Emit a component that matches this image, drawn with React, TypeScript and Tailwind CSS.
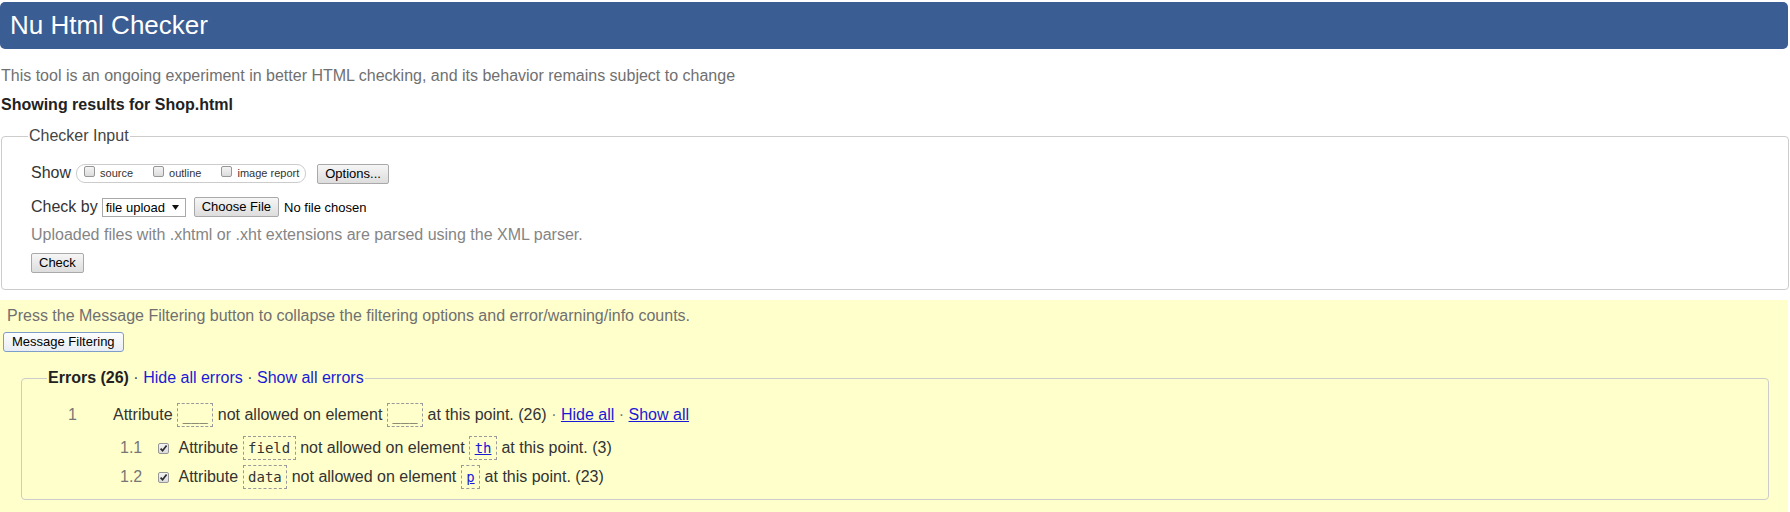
const sans = "font-['Liberation_Sans',Arial,sans-serif]";
const mono = "font-['DejaVu_Sans_Mono','Liberation_Mono',monospace]";

function Checkbox({ checked }: { checked?: boolean }) {
  return (
    <span className="inline-flex h-[11px] w-[11px] shrink-0 items-center justify-center rounded-[2px] border border-[#979797] bg-linear-to-b from-[#f4f4f4] to-[#dcdcdc]">
      {checked && (
        <svg width="9" height="9" viewBox="0 0 9 9">
          <path d="M1.6 4.6 L3.6 6.8 L7.6 1.6" fill="none" stroke="#2b2b2b" strokeWidth="1.7" />
        </svg>
      )}
    </span>
  );
}

function Btn({ children, className = "" }: { children: React.ReactNode; className?: string }) {
  return (
    <span
      className={
        "inline-flex h-[20px] items-center rounded-[2px] border border-[#a9a9a9] bg-linear-to-b from-[#f6f6f6] to-[#dddddd] px-[7px] text-[13px] leading-[18px] text-black " +
        className
      }
    >
      {children}
    </span>
  );
}

function Code({ children, link }: { children: React.ReactNode; link?: boolean }) {
  return (
    <span
      className={
        "inline-block border border-dashed border-[#9a9a9a] px-[4.5px] align-baseline text-[14px] leading-[22px] " +
        mono +
        (link ? " text-[#1a1ad6] underline" : " text-[#333]")
      }
    >
      {children}
    </span>
  );
}

function PillOption({ label }: { label: string }) {
  return (
    <span className="flex items-center">
      <span className="mb-[3px]">
        <Checkbox />
      </span>
      <span className="ml-[5px] text-[11px] leading-[13px] text-[#333]">{label}</span>
    </span>
  );
}

export default function App() {
  return (
    <div className={"min-h-[512px] bg-white text-[16px] " + sans}>
      {/* page heading */}
      <div className="mr-[2px] mt-[2px] h-[47px] rounded-[5px] bg-[#3a5d94] pl-[10px] pt-[8px]">
        <h1 className="text-[26px] font-normal leading-[30px] text-white">Nu Html Checker</h1>
      </div>

      <p className="mt-[17px] pl-[1px] leading-[20px] text-[#707070]">
        This tool is an ongoing experiment in better HTML checking, and its behavior remains subject to change
      </p>
      <p className="mt-[9px] pl-[1px] font-bold leading-[20px] text-[#222]">Showing results for Shop.html</p>

      {/* checker input */}
      <fieldset className="mx-[1px] mt-[11px] rounded-[4px] border border-[#cccccc] pb-[15px] pl-[26px] pt-[18px]">
        <legend className="px-[1px] leading-[20px] text-[#444]">Checker Input</legend>
        <div className="pl-[3px]">
          <div className="flex h-[20px] items-start">
            <span className="leading-[18px] text-[#333]">Show</span>
            <div className="ml-[5px] flex h-[19px] items-center gap-[20px] rounded-[9px] border border-[#cccccc] pl-[7px] pr-[6px]">
              <PillOption label="source" />
              <PillOption label="outline" />
              <PillOption label="image report" />
            </div>
            <Btn className="ml-[11px]">Options...</Btn>
          </div>

          <div className="mt-[13px] flex h-[20px] items-start">
            <span className="mt-[1px] leading-[18px] text-[#333]">Check by</span>
            <span className="ml-[4px] mt-[1px] flex h-[19px] w-[84px] items-center justify-between border border-[#a9a9a9] bg-white pl-[3px] pr-[6px] text-[13px] leading-[17px] text-black">
              file upload
              <svg width="7" height="5" viewBox="0 0 7 5">
                <path d="M0 0 H7 L3.5 5 Z" fill="#111" />
              </svg>
            </span>
            <Btn className="ml-[8px]">Choose File</Btn>
            <span className="ml-[5px] text-[13px] leading-[21px] text-black">No file chosen</span>
          </div>

          <p className="mt-[7px] leading-[21px] text-[#858585]">
            Uploaded files with .xhtml or .xht extensions are parsed using the XML parser.
          </p>
          <Btn className="mt-[8px]">Check</Btn>
        </div>
      </fieldset>

      {/* results */}
      <div className="mr-[2px] mt-[10px] bg-[#ffffcc] pb-[20px] pt-[5px]">
        <p className="pl-[7px] leading-[21px] text-[#707070]">
          Press the Message Filtering button to collapse the filtering options and error/warning/info counts.
        </p>
        <span className="ml-[3px] mt-[6px] inline-flex h-[20px] items-center rounded-[3px] border border-[#7f9dc9] bg-linear-to-b from-[#fdfdfd] to-[#e8edf4] px-[8px] text-[13px] leading-[18px] text-black">
          Message Filtering
        </span>

        <fieldset className="ml-[21px] mr-[19px] mt-[15px] rounded-[4px] border border-[#cccccc] pb-[9px] pl-[25px] pt-[15px]">
          <legend className="px-[1px] leading-[20px]">
            <span className="font-bold text-[#222]">Errors (26)</span>
            <span className="text-[#444]"> · </span>
            <span className="text-[#1a1ad6]">Hide all errors</span>
            <span className="text-[#444]"> · </span>
            <span className="text-[#1a1ad6]">Show all errors</span>
          </legend>

          <div className="h-[25px] whitespace-nowrap pl-[21px] leading-[24px] text-[#333]">
            <span className="inline-block w-[45px] text-[#777]">1</span>
            Attribute <Code>___</Code> not allowed on element <Code>___</Code> at this point. (26){" "}
            <span className="text-[#777]">·</span> <span className="text-[#1a1ad6] underline">Hide all</span>{" "}
            <span className="text-[#777]">·</span> <span className="text-[#1a1ad6] underline">Show all</span>
          </div>

          <div className="mt-[8px] h-[25px] whitespace-nowrap pl-[73px] leading-[24px] text-[#333]">
            <span className="inline-block w-[37.5px] text-[#777]">1.1</span>
            <span className="mb-[2px] mr-[10px] inline-block align-baseline">
              <Checkbox checked />
            </span>
            Attribute <Code>field</Code> not allowed on element <Code link>th</Code> at this point. (3)
          </div>

          <div className="mt-[4px] h-[25px] whitespace-nowrap pl-[73px] leading-[24px] text-[#333]">
            <span className="inline-block w-[37.5px] text-[#777]">1.2</span>
            <span className="mb-[2px] mr-[10px] inline-block align-baseline">
              <Checkbox checked />
            </span>
            Attribute <Code>data</Code> not allowed on element <Code link>p</Code> at this point. (23)
          </div>
        </fieldset>
      </div>
    </div>
  );
}
